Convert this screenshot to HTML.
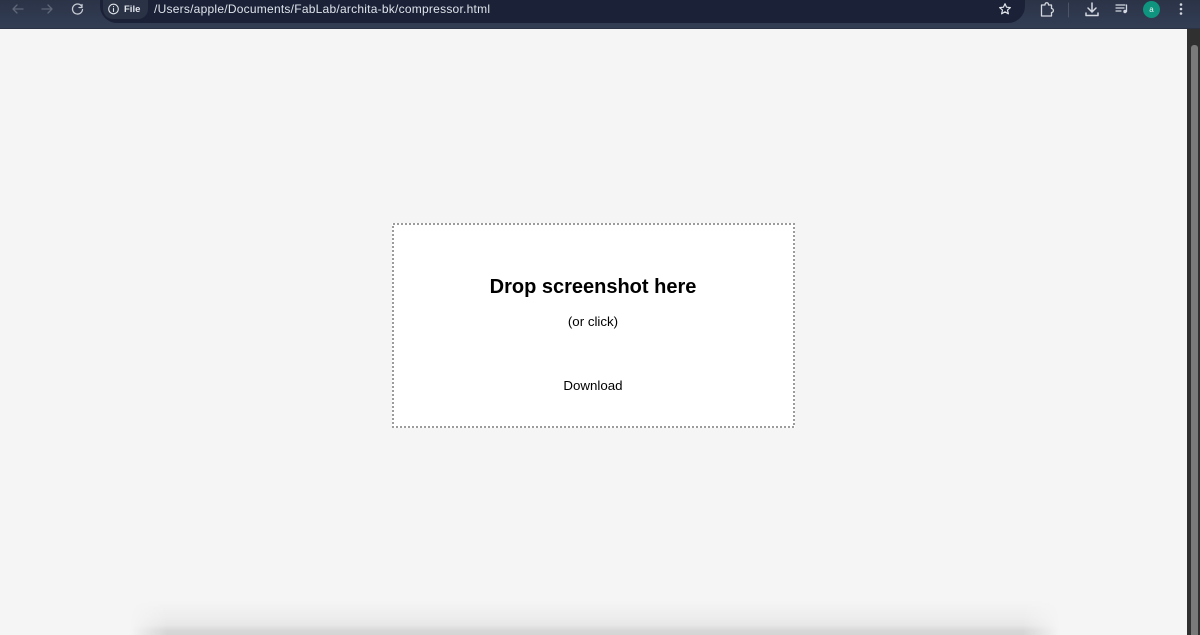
<!DOCTYPE html>
<html>
<head>
<meta charset="utf-8">
<style>
html,body{margin:0;padding:0;width:1200px;height:635px;overflow:hidden;background:#f5f5f5;font-family:"Liberation Sans",sans-serif}
#wrap{position:relative;width:1200px;height:635px;overflow:hidden;background:#f5f5f5}
#bar{position:absolute;left:0;top:0;width:1200px;height:28px;background:linear-gradient(#2b3347,#323d54);border-bottom:1px solid #2a3244}
#pill{position:absolute;left:100px;top:0;width:925px;height:23px;border-radius:0 0 17px 17px;background:#1b2238}
#chip{position:absolute;left:103px;top:0;width:45px;height:19px;border-radius:0 0 10px 10px;background:#2a3245}
#file{position:absolute;left:124px;top:4px;font-size:9.500px;font-weight:bold;line-height:11px;color:#e3e6ec}
#url{position:absolute;left:154px;top:2px;font-size:12px;line-height:14px;color:#dfe3ea;letter-spacing:.24px;white-space:nowrap}
svg.i{position:absolute;left:0;top:0}
#av{position:absolute;left:1143px;top:1px;width:17px;height:17px;border-radius:50%;background:#0f947f;color:#e8f5f2;font-size:8px;line-height:17px;text-align:center}
#sb{position:absolute;left:1187px;top:29px;width:13px;height:606px;background:#303030}
#th{position:absolute;left:1191px;top:45px;width:7px;height:590px;background:#7a7a7a;border-radius:3px 3px 0 0}
#shadow{position:absolute;left:130px;top:600px;width:930px;height:35px;background:linear-gradient(rgba(0,0,0,0),rgba(0,0,0,.03) 50%,rgba(0,0,0,.055) 72%,rgba(0,0,0,.12) 88%,rgba(0,0,0,.13) 100%);-webkit-mask-image:linear-gradient(to right,transparent,#000 4%,#000 96%,transparent);mask-image:linear-gradient(to right,transparent,#000 4%,#000 96%,transparent)}
#box{position:absolute;left:392px;top:223px;width:403px;height:205px;background:#fff;color:#000;text-align:center}
#box svg{position:absolute;left:0;top:0}
#h{position:absolute;left:0;width:402px;top:52px;font-size:20px;line-height:25px;font-weight:bold;white-space:nowrap}
#o{position:absolute;left:0;width:402px;top:90px;font-size:13.300px;line-height:17px}
#d{position:absolute;left:0;width:402px;top:154px;font-size:13.300px;line-height:17px}
</style>
</head>
<body>
<div id="wrap">
<div id="shadow"></div>
<div id="sb"></div>
<div id="th"></div>
<div id="bar"></div>
<div id="pill"></div>
<div id="chip"></div>
<div id="file">File</div>
<div id="url">/Users/apple/Documents/FabLab/archita-bk/compressor.html</div>
<div id="av">a</div>
<svg class="i" width="1200" height="28" fill="none" stroke-linecap="round" stroke-linejoin="round">
  <g stroke="#5f6779" stroke-width="1.3">
    <path d="M23 9H13M17 5l-4 4 4 4"/>
    <path d="M42 9h10M48 5l4 4-4 4"/>
  </g>
  <g stroke="#c6cad3" stroke-width="1.3">
    <path d="M81.500 6A5 5 0 1 0 82.500 9.500"/>
    <path d="M82 4.500V7.500H79"/>
    <circle cx="113.500" cy="9" r="4.800" stroke="#dfe2e8" stroke-width="1.100"/>
    <path d="M113.500 8.500v3M113.500 6.500v.2" stroke="#dfe2e8" stroke-width="1.100"/>
    <path d="M1005 3.700l1.600 3.500 3.800.4-2.900 2.500.9 3.700-3.400-2-3.400 2 .9-3.700-2.900-2.500 3.800-.4z" stroke="#dfe2e8" stroke-width="1.200"/>
    <path d="M1041.500 5h3.500c0-3 3.500-3 3.500 0h3v3.500c2.500 0 2.500 4 0 4v3.500h-10z" stroke="#d4d8e0" stroke-width="1.300"/>
    <path d="M1068.500 3v14" stroke="#4c5568" stroke-width="1"/>
    <path d="M1092 3v8.500M1088 8l4 4 4-4M1086 13v2.500h12V13" stroke="#d4d8e0" stroke-width="1.500"/>
    <path d="M1116 5h9M1116 8h8M1116 11h5" stroke="#d4d8e0" stroke-width="1.200"/>
    <path d="M1126.500 5v6.500" stroke="#d4d8e0" stroke-width="1.300"/>
  </g>
  <circle cx="1125" cy="11.500" r="1.700" fill="#d4d8e0"/>
  <circle cx="1181" cy="4.500" r="1.300" fill="#d4d8e0"/>
  <circle cx="1181" cy="9" r="1.300" fill="#d4d8e0"/>
  <circle cx="1181" cy="13.500" r="1.300" fill="#d4d8e0"/>
</svg>
<div id="box">
  <svg width="403" height="205" fill="none"><rect x="1" y="1" width="401" height="203" stroke="#9c9c9c" stroke-width="2" stroke-dasharray="2 2"/></svg>
  <div id="h">Drop screenshot here</div>
  <div id="o">(or click)</div>
  <div id="d">Download</div>
</div>
</div>
</body>
</html>
